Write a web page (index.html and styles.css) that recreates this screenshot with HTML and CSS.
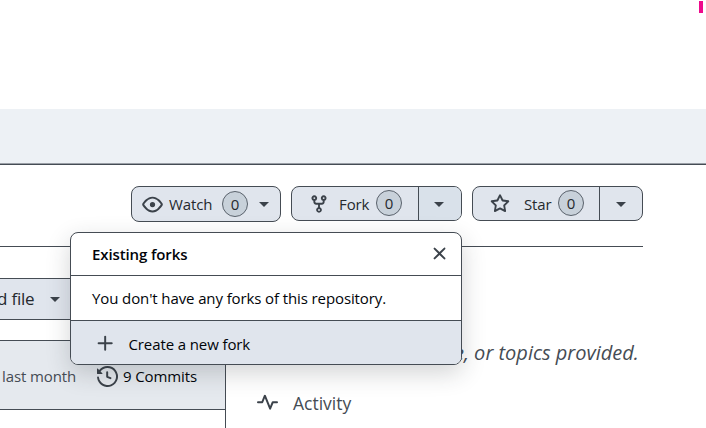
FILE: index.html
```html
<!DOCTYPE html>
<html lang="en">
<head>
<meta charset="utf-8">
<title>Repository</title>
<link rel="stylesheet" href="styles.css">
</head>
<body>
<header class="top"><span class="marker"></span></header>
<nav class="band"></nav>
<main>
  <div class="pagehead">
    <div class="btn watch">
      <svg class="icon eye" viewBox="0 0 16 16"><path d="M8 2c1.981 0 3.671.992 4.933 2.078 1.27 1.091 2.187 2.345 2.637 3.023a1.62 1.62 0 0 1 0 1.798c-.45.678-1.367 1.932-2.637 3.023C11.67 13.008 9.981 14 8 14s-3.671-.992-4.933-2.078C1.797 10.83.88 9.576.43 8.898a1.62 1.62 0 0 1 0-1.798c.45-.677 1.367-1.931 2.637-3.022C4.33 2.992 6.019 2 8 2ZM1.679 7.932a.12.12 0 0 0 0 .136c.411.622 1.241 1.75 2.366 2.717C5.176 11.758 6.527 12.5 8 12.5s2.825-.742 3.955-1.715c1.124-.967 1.954-2.096 2.366-2.717a.12.12 0 0 0 0-.136c-.412-.621-1.242-1.75-2.366-2.717C10.824 4.242 9.473 3.5 8 3.5s-2.824.742-3.955 1.715c-1.124.967-1.954 2.096-2.366 2.717ZM8 10a2 2 0 1 1 0-4 2 2 0 0 1 0 4Z"/></svg>
      <span class="t-watch">Watch</span><span class="count">0</span><i class="caret"></i>
    </div>
    <div class="btn fork">
      <div class="main">
        <svg class="icon" viewBox="0 0 16 16"><path d="M5 5.372v.878c0 .414.336.75.75.75h4.5a.75.75 0 0 0 .75-.75v-.878a2.25 2.25 0 1 1 1.5 0v.878a2.25 2.25 0 0 1-2.25 2.25h-1.5v2.128a2.251 2.251 0 1 1-1.5 0V8.5h-1.5A2.25 2.25 0 0 1 3.5 6.25v-.878a2.25 2.25 0 1 1 1.5 0ZM5 3.25a.75.75 0 1 0-1.5 0 .75.75 0 0 0 1.5 0Zm6.75.75a.75.75 0 1 0 0-1.5.75.75 0 0 0 0 1.5Zm-3 8.75a.75.75 0 1 0-1.5 0 .75.75 0 0 0 1.5 0Z"/></svg>
        <span class="t-fork">Fork</span><span class="count">0</span>
      </div>
      <div class="drop open"><i class="caret"></i></div>
    </div>
    <div class="btn star">
      <div class="main">
        <svg class="icon" viewBox="0 0 16 16"><path d="M8 .25a.75.75 0 0 1 .673.418l1.882 3.815 4.21.612a.75.75 0 0 1 .416 1.279l-3.046 2.97.719 4.192a.751.751 0 0 1-1.088.791L8 12.347l-3.766 1.98a.75.75 0 0 1-1.088-.79l.72-4.194L.818 6.374a.75.75 0 0 1 .416-1.28l4.21-.611L7.327.668A.75.75 0 0 1 8 .25Zm0 2.445L6.615 5.5a.75.75 0 0 1-.564.41l-3.097.45 2.24 2.184a.75.75 0 0 1 .216.664l-.528 3.084 2.769-1.456a.75.75 0 0 1 .698 0l2.77 1.456-.53-3.084a.75.75 0 0 1 .216-.664l2.24-2.183-3.096-.45a.75.75 0 0 1-.564-.41L8 2.694Z"/></svg>
        <span class="t-star">Star</span><span class="count">0</span>
      </div>
      <div class="drop"><i class="caret"></i></div>
    </div>
  </div>
  <div class="columns">
    <div class="files">
      <div class="addfile"><span class="t-file">d file</span><i class="caret"></i></div>
      <div class="table">
        <div class="commit">
          <span class="t-month">last month</span>
          <svg class="icon history" viewBox="0 0 16 16"><path d="m.427 1.927 1.215 1.215a8.002 8.002 0 1 1-1.6 5.685.75.75 0 1 1 1.493-.154 6.5 6.5 0 1 0 1.18-4.458l1.358 1.358A.25.25 0 0 1 3.896 6H.25A.25.25 0 0 1 0 5.75V2.104a.25.25 0 0 1 .427-.177ZM7.75 4a.75.75 0 0 1 .75.75v2.992l2.028.812a.75.75 0 0 1-.557 1.392l-2.5-1A.751.751 0 0 1 7 8.25v-3.5A.75.75 0 0 1 7.75 4Z"/></svg>
          <span class="t-commits">9 Commits</span>
        </div>
      </div>
    </div>
    <aside class="about">
      <p class="topics">e, or topics provided.</p>
      <div class="activity">
        <svg class="icon" viewBox="0 0 16 16"><path d="M6 2c.306 0 .582.187.696.471L10 10.731l1.304-3.26A.751.751 0 0 1 12 7h3.25a.75.75 0 0 1 0 1.5h-2.742l-1.812 4.528a.751.751 0 0 1-1.392 0L6 4.77 4.696 8.03A.75.75 0 0 1 4 8.5H.75a.75.75 0 0 1 0-1.5h2.742l1.812-4.529A.751.751 0 0 1 6 2Z"/></svg>
        <span class="t-activity">Activity</span>
      </div>
    </aside>
  </div>
</main>
<section class="popover">
  <div class="title"><span class="t-title">Existing forks</span>
    <svg class="icon close" viewBox="0 0 16 16"><path d="M3.72 3.72a.75.75 0 0 1 1.06 0L8 6.94l3.22-3.22a.749.749 0 0 1 1.275.326.749.749 0 0 1-.215.734L9.06 8l3.22 3.22a.749.749 0 0 1-.326 1.275.749.749 0 0 1-.734-.215L8 9.06l-3.22 3.22a.751.751 0 0 1-1.042-.018.751.751 0 0 1-.018-1.042L6.94 8 3.72 4.78a.75.75 0 0 1 0-1.06Z"/></svg>
  </div>
  <div class="message"><span class="t-message">You don't have any forks of this repository.</span></div>
  <div class="create">
    <svg class="icon" viewBox="0 0 16 16"><path d="M7.75 2a.75.75 0 0 1 .75.75V7h4.25a.75.75 0 0 1 0 1.5H8.5v4.25a.75.75 0 0 1-1.5 0V8.5H2.75a.75.75 0 0 1 0-1.5H7V2.75A.75.75 0 0 1 7.75 2Z"/></svg>
    <span class="t-create">Create a new fork</span>
  </div>
</section>
</body>
</html>
```
FILE: styles.css
```css
* { box-sizing: border-box; }
body {
  margin: 0;
  width: 706px;
  height: 428px;
  overflow: hidden;
  position: relative;
  background: #fff;
  color: #25292e;
  font: 15px/20px "Segoe UI", "Open Sans", "Noto Sans", sans-serif;
  letter-spacing: -.11px;
}
span { white-space: nowrap; }
.top { height: 109px; display: flex; justify-content: flex-end; padding: 1px 3px 0 0; }
.marker { width: 4px; height: 12px; background: #ee0a8c; }
.band { height: 56px; background: #edf1f5; border-bottom: 1px solid #454c54; box-shadow: inset 0 -1px #9a9fa6; }
.icon { flex: none; width: 20px; height: 20px; fill: #3b424a; display: block; }
.eye { width: 21px; height: 21px; }
.caret { flex: none; border: 5px solid transparent; border-top-color: #3b424a; border-bottom: 0; }
.pagehead { width: 643px; height: 82px; padding: 21px 0 0 131px; border-bottom: 1px solid #454c54; display: flex; align-items: flex-start; gap: 10px; }
.btn { display: flex; height: 35px; border: 1px solid #454c54; border-radius: 8px; background: #e0e5ed; overflow: hidden; }
.watch { width: 150px; height: 36px; align-items: center; padding-left: 10px; }
.watch .count { margin-left: 9px; }
.watch .caret { margin-left: 11px; }
.t-watch { width: 44px; margin-left: 6px; }
.fork, .star { width: 171px; }
.main { width: 126px; display: flex; align-items: center; padding-left: 17px; }
.t-fork { width: 31px; margin-left: 10px; }
.t-star { width: 27px; margin-left: 14px; }
.main .count { margin-left: 6px; position: relative; top: -1px; }
.star .count { margin-left: 7px; }
.drop { flex: 1; border-left: 1px solid #454c54; display: flex; align-items: center; padding: 1px 0 0 15px; }
.star .drop { padding-left: 16px; }
.drop.open { background: #d9e1ea; }
.count { flex: none; width: 26px; height: 26px; border: 1px solid #59616b; border-radius: 50%; background: #c8d1da; text-align: center; line-height: 25px; }
.columns { display: flex; height: 181px; }
.files { width: 226px; padding-top: 31px; }
.addfile { height: 42px; width: 90px; border: solid #454c54; border-width: 1px 0; background: #e0e5ed; display: flex; align-items: center; font-size: 17px; }
.addfile .caret { margin-left: 15px; }
.t-file { width: 38px; margin-left: -3px; letter-spacing: -.2px; }
.table { margin-top: 20px; height: 90px; border: solid #454c54; border-width: 1px 1px 0 0; }
.commit { height: 69px; background: #e5e9ee; border-bottom: 1px solid #454c54; display: flex; align-items: center; padding: 2px 0 0 2px; }
.t-month { width: 73px; color: #454c54; }
.history { width: 21px; height: 21px; margin-left: 22px; }
.t-commits { margin-left: 5px; color: #010409; }
.about { flex: 1; color: #454c54; padding-top: 91px; }
.topics { margin: 0 0 0 228px; font-size: 20px; line-height: 30px; font-style: italic; white-space: nowrap; letter-spacing: 0; }
.activity { display: flex; align-items: center; margin: 24px 0 0 31px; font-size: 17.5px; letter-spacing: 0; }
.activity .icon { width: 21px; height: 21px; }
.t-activity { margin-left: 15px; }
.popover { position: absolute; left: 70px; top: 232px; width: 392px; height: 133px; border: 1px solid #454c54; border-radius: 8px; overflow: hidden; background: #fff; color: #010409; box-shadow: 0 8px 24px rgba(37, 41, 46, .2); }
.title { height: 43px; border-bottom: 1px solid #454c54; display: flex; align-items: center; justify-content: space-between; padding: 0 11px 0 21px; font-weight: 600; }
.close { width: 21px; height: 21px; margin-bottom: 2px; }
.message { height: 45px; border-bottom: 1px solid #454c54; display: flex; align-items: center; padding-left: 21px; }
.create { height: 44px; background: #e0e5ed; display: flex; align-items: center; padding: 2px 0 0 24px; }
.create .icon { width: 21px; height: 21px; margin-bottom: 2px; }
.t-create { margin-left: 12.5px; }
```
